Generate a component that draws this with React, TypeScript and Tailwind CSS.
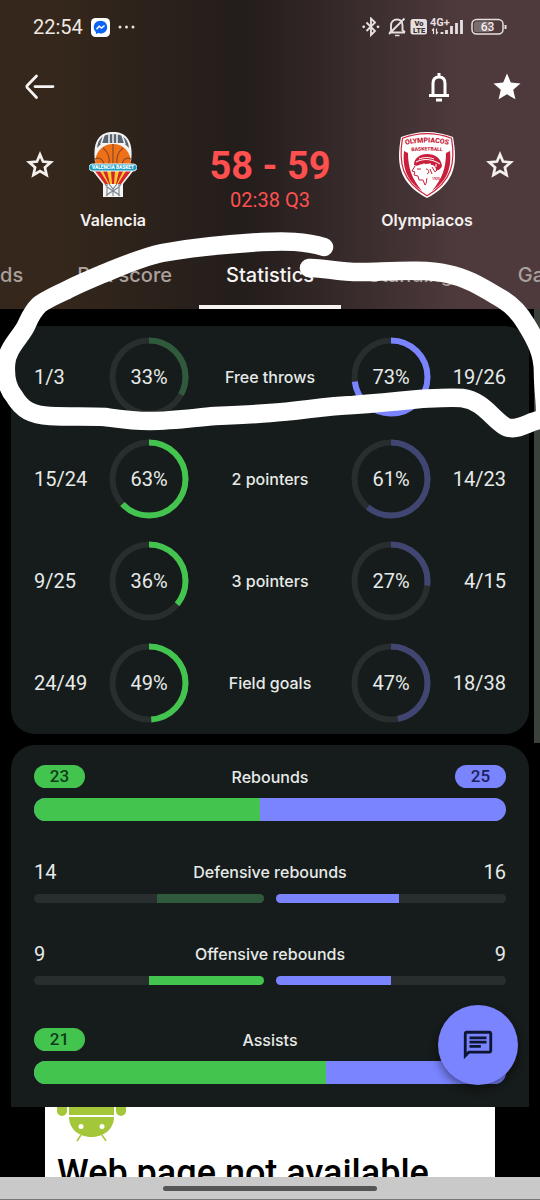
import React from 'react';

type Side = 'home' | 'away';

const shots = [
  { label: 'Free throws', home: '1/3', homePct: 33, away: '19/26', awayPct: 73 },
  { label: '2 pointers', home: '15/24', homePct: 63, away: '14/23', awayPct: 61 },
  { label: '3 pointers', home: '9/25', homePct: 36, away: '4/15', awayPct: 27 },
  { label: 'Field goals', home: '24/49', homePct: 49, away: '18/38', awayPct: 47 },
];

const ringColors = {
  home: { on: '#43c44f', off: '#305a3c' },
  away: { on: '#7a84ff', off: '#414572' },
};

function StatusIcons() {
  return (
    <svg width="146" height="20" viewBox="0 0 146 20" fill="none" stroke="#e6dfdf" aria-hidden="true">
      <path d="M4.500 5.500l8.500 8.500-4 4V1.500l4 4-8.500 8.500" strokeWidth="1.900" />
      <circle cx="1.700" cy="9.800" r="1.400" fill="#e6dfdf" stroke="none" />
      <circle cx="16" cy="9.800" r="1.400" fill="#e6dfdf" stroke="none" />
      <path d="M27 15.500h16M29 15V8.500c0-3.500 2.500-6 6-6s5.500 2.500 5.500 6V13l2.500 2.500M27 17L42.500 1.500" strokeWidth="1.900" />
      <path d="M33 18.500h4.500" strokeWidth="1.500" />
      <rect x="48.500" y="2" width="16.500" height="15.500" rx="2.500" fill="#e6dfdf" stroke="none" />
      <g fill="#3b2f30" stroke="none" fontFamily="Roboto, sans-serif" fontWeight="900" fontSize="7.500" textAnchor="middle">
        <text x="57" y="9">Vo</text>
        <text x="57" y="16">LTE</text>
      </g>
      <text x="68" y="8.500" fill="#e6dfdf" stroke="none" fontFamily="Roboto, sans-serif" fontWeight="700" fontSize="11">4G+</text>
      <path d="M71.500 17v-5l-1.500 1.500M74.500 11.500v5l1.500-1.500" strokeWidth="1.200" />
      <path d="M80 17v-2M84.500 17v-4M89.500 17V9M94.500 17V6M99.500 17V3" strokeWidth="2.800" />
      <rect x="110" y="2.500" width="31" height="14.500" rx="4.500" strokeWidth="1.500" />
      <rect x="112" y="4.500" width="17" height="10.500" rx="2.500" fill="#7b6d6e" stroke="none" />
      <path d="M143.500 8v4" strokeWidth="2" />
      <text x="125.500" y="13.800" fill="#f3eeee" stroke="none" fontFamily="Roboto, sans-serif" fontWeight="500" fontSize="12" textAnchor="middle">63</text>
    </svg>
  );
}

function MessengerBadge() {
  return (
    <svg width="19" height="19" viewBox="0 0 19 19" aria-hidden="true">
      <rect width="19" height="19" rx="4.500" fill="#fff" />
      <path d="M9.500 2.800c-3.900 0-6.700 2.800-6.700 6.400 0 2 .8 3.600 2.100 4.700v2.300l2.100-1.100c.8.300 1.600.4 2.500.4 3.900 0 6.700-2.700 6.700-6.300s-2.800-6.400-6.700-6.400z" fill="#0b63f3" />
      <path d="M5.500 11.300l2.700-3.100 2.400 1.900 2.900-2.600" fill="none" stroke="#fff" strokeWidth="1.500" />
    </svg>
  );
}

function StarIcon({ filled = false }: { filled?: boolean }) {
  return (
    <svg width="28" height="28" viewBox="0 0 28 28" aria-hidden="true">
      <path
        d={filled
          ? 'M14 .500l3.800 9 9.700.900-7.300 6.400 2.200 9.500-8.400-5-8.400 5 2.200-9.500L.500 10.400l9.700-.9z'
          : 'M14 3.500l3 7.100 7.700.700-5.800 5.100 1.700 7.500-6.600-3.900-6.600 3.900 1.700-7.500-5.800-5.100 7.700-.7z'}
        fill={filled ? '#fff' : 'none'}
        stroke={filled ? 'none' : '#f4f0ee'}
        strokeWidth="2.700"
      />
    </svg>
  );
}

function ValenciaLogo() {
  return (
    <svg width="48" height="67" viewBox="0 0 48 67" role="img" aria-label="Valencia Basket">
      <path d="M6 31C3 8 12 1 24 1s21 7 18 30z" fill="#f4f4f2" />
      <path d="M8 17C9 7 15 3 24 3s15 4 16 14l-5-5H13z" fill="#596573" />
      <path d="M15 4l-3 9M20 3v9M24 2v10M28 3v9M33 4l3 9" stroke="#f4f4f2" strokeWidth="1.500" />
      <path d="M6 33c0-13 8-20 18-20s18 7 18 20z" fill="#ef7117" />
      <path d="M24 13v20M6 28c4-2 7-1 9 5M42 28c-4-2-7-1-9 5M14 17c5 4 7 9 6 16M34 17c-5 4-7 9-6 16" fill="none" stroke="#8d4a2c" strokeWidth="1.200" />
      <path d="M3 39h42L34 53v13H14V53z" fill="#f4f4f2" />
      <path d="M6 40h36L32 53H16z" fill="#f6c928" />
      <path d="M6 40h5l8 13h-3zM14 40h4l3 13h-1zM22 40h4l-1 13h-2zM30 40h4l-6 13h-1zM37 40h5L32 53h-3z" fill="#d52331" />
      <path d="M16 53c3 6 12 8 15 12M32 53c-3 6-12 8-15 12M20 53l4 5 4-5M18 53v12M30 53v12M24 58v7" fill="none" stroke="#778391" strokeWidth="1.100" />
      <path d="M4 33h40c3 0 4 2 4 3.500S47 40 44 40H4c-3 0-4-2-4-3.500S1 33 4 33z" fill="#1d9dc6" stroke="#edf6f8" strokeWidth="1" />
      <text x="24" y="38.200" textAnchor="middle" fontFamily="Roboto, sans-serif" fontWeight="900" fontSize="4.800" fill="#fff">VALENCIA BASKET</text>
    </svg>
  );
}

function OlympiacosLogo() {
  return (
    <svg width="60" height="68" viewBox="0 0 60 68" role="img" aria-label="Olympiacos Basketball">
      <path d="M30 1c9 0 18 2 26 5 5 27 2 46-26 61C2 52-1 33 4 6c8-3 17-5 26-5z" fill="#fff" />
      <path d="M30 2.700c8 0 16 1.500 24.500 4.500 4 24 1 43-24.500 57.500C4.500 50.200 1.500 31.200 5.500 7.200 14 4.200 22 2.700 30 2.700z" fill="none" stroke="#cf2440" strokeWidth="1.200" />
      <path d="M7 20l4 2c0 15 4 26 14 38C12 51 5 40 7 20zM53 20l-4 2c0 15-4 26-14 38 13-9 20-20 18-40z" fill="#c91f3b" />
      <path id="crest-arc-a" d="M7 14q23-5 46 0" fill="none" />
      <path id="crest-arc-b" d="M13 20.500q17-2 34 0" fill="none" />
      <g fontFamily="Roboto, sans-serif" fontWeight="900" fill="#c91f3b" textAnchor="middle">
        <text fontSize="7"><textPath href="#crest-arc-a" startOffset="50%">OLYMPIACOS</textPath></text>
        <text fontSize="5"><textPath href="#crest-arc-b" startOffset="50%">BASKETBALL</textPath></text>
      </g>
      <path d="M17 34c0-7 6-11 13-11 8 0 14 4 15 12-1 3-4 5-6 4 0-3-2-5-4-5-4-3-7 0-9-1-3 0-6 3-9 1z" fill="#c91f3b" />
      <path d="M19 31c8-4 16-3 24 2M22 28c5-2 10-2 15 0M27 32v3M33 32v3M39 33v3" stroke="#fff" strokeWidth="1" fill="none" />
      <path d="M18 35l-3 5 3 1-1 3 4 1 1 4 4 0 2 5c2-2 1-4 2-7M29 38c3 0 4 4 1 5M20 38h4M35 36l3 5 3-3M33 38l2 5" fill="none" stroke="#c91f3b" strokeWidth="1" />
      <text x="39" y="49" textAnchor="middle" fontFamily="Roboto, sans-serif" fontWeight="700" fontSize="3.500" fill="#c91f3b">1925</text>
    </svg>
  );
}

function Team({ name, children }: { name: string; children: React.ReactNode }) {
  return (
    <div className="flex w-[118px] flex-col items-center gap-2.5">
      <div className="flex h-[67px] items-center">{children}</div>
      <h2 className="font-[Inter,sans-serif] text-base leading-6 font-semibold text-[#f4f0ee]">{name}</h2>
    </div>
  );
}

function Ring({ value, side, active }: { value: number; side: Side; active: boolean }) {
  const length = 2 * Math.PI * 36;
  const color = active ? ringColors[side].on : ringColors[side].off;
  return (
    <div className="relative flex size-20 items-center justify-center">
      <svg className="absolute inset-0 -rotate-90" width="80" height="80" viewBox="0 0 80 80" fill="none" strokeWidth="6" aria-hidden="true">
        <circle cx="40" cy="40" r="36.500" stroke="#282e2d" />
        <circle cx="40" cy="40" r="36.500" stroke={color} pathLength={length} strokeDasharray={`${(length * value) / 100} ${length}`} />
      </svg>
      <span className="relative text-xl">{value}%</span>
    </div>
  );
}

function Pill({ value, side }: { value: number; side: Side }) {
  return (
    <span className={`flex h-[23px] w-[51px] items-center justify-center rounded-full text-[17px] font-medium ${side === 'home' ? 'bg-[#43c44f] text-[#0f3d1d]' : 'bg-[#7a84ff] text-[#1c2258]'}`}>
      {value}
    </span>
  );
}

function TotalStat({ label, home, away }: { label: string; home: number; away: number }) {
  return (
    <div className="flex flex-col gap-2.5">
      <div className="flex h-[23px] items-center justify-between">
        <Pill value={home} side="home" />
        <span className="font-[Inter,sans-serif] text-base font-medium">{label}</span>
        <Pill value={away} side="away" />
      </div>
      <div className="flex h-[23px] overflow-hidden rounded-full bg-[#7a84ff]">
        <div className="bg-[#43c44f]" style={{ width: `${(home / (home + away)) * 100}%` }} />
      </div>
    </div>
  );
}

function SplitStat({ label, home, away }: { label: string; home: number; away: number }) {
  const total = home + away;
  return (
    <div className="flex flex-col gap-2.5">
      <div className="grid h-6 grid-cols-[1fr_auto_1fr] items-center">
        <span className="text-xl leading-6">{home}</span>
        <span className="font-[Inter,sans-serif] text-base font-medium">{label}</span>
        <span className="text-right text-xl leading-6">{away}</span>
      </div>
      <div className="grid grid-cols-2 gap-3">
        <div className="flex h-[9px] justify-end overflow-hidden rounded-full bg-[#282e2d]">
          <div className={home >= away ? 'bg-[#43c44f]' : 'bg-[#305a3c]'} style={{ width: `${(home / total) * 100}%` }} />
        </div>
        <div className="flex h-[9px] overflow-hidden rounded-full bg-[#282e2d]">
          <div className={away >= home ? 'bg-[#7a84ff]' : 'bg-[#414572]'} style={{ width: `${(away / total) * 100}%` }} />
        </div>
      </div>
    </div>
  );
}

function Tab({ label, active = false }: { label: string; active?: boolean }) {
  return (
    <button
      type="button"
      role="tab"
      aria-selected={active}
      className={`h-[60px] shrink-0 border-b-4 px-[27px] pb-1 font-[Inter,sans-serif] text-xl leading-6 font-medium whitespace-nowrap ${active ? 'border-[#f7f3f2] text-[#f7f3f2]' : 'border-transparent text-[#aaa19e]'}`}
    >
      {label}
    </button>
  );
}

function Header() {
  return (
    <header className="bg-linear-to-r from-[#35271b] from-10% via-[#231d1b] via-45% to-[#4e3a3c] to-85%">
      <div className="flex h-[54px] items-center justify-between pr-8 pl-[33px]">
        <div className="flex items-center gap-2 text-[#eee7e2]">
          <span className="text-xl">22:54</span>
          <MessengerBadge />
          <svg width="17" height="4" viewBox="0 0 17 4" fill="#e6dfdf" aria-hidden="true">
            <circle cx="2" cy="2" r="1.500" />
            <circle cx="8.500" cy="2" r="1.500" />
            <circle cx="15" cy="2" r="1.500" />
          </svg>
        </div>
        <StatusIcons />
      </div>
      <div className="flex h-[66px] items-center justify-between pr-[19px] pl-6">
        <button type="button" aria-label="Back">
          <svg width="31" height="28" viewBox="0 0 31 28" fill="none" stroke="#f7f3f2" strokeWidth="2.800" strokeLinecap="round" strokeLinejoin="round" aria-hidden="true">
            <path d="M12.500 3L3.500 12.300q-1.300 1.300 0 2.600L12.500 24.500M11 13.600h18" />
          </svg>
        </button>
        <div className="flex items-center gap-10">
          <button type="button" aria-label="Notifications">
            <svg width="28" height="30" viewBox="0 0 28 30" fill="none" stroke="#fff" strokeWidth="3" aria-hidden="true">
              <path d="M4 23.500h20M8 23V11.500c0-4.500 2-6.500 6-6.500s6 2 6 6.500V23M14 1v4M11 28h6" />
            </svg>
          </button>
          <button type="button" aria-label="Remove match from favourites">
            <StarIcon filled />
          </button>
        </div>
      </div>
      <div className="flex items-start px-[26px] pt-[11px]">
        <button type="button" aria-label="Follow Valencia" className="mt-5">
          <StarIcon />
        </button>
        <Team name="Valencia"><ValenciaLogo /></Team>
        <div className="flex flex-1 flex-col items-center gap-0.5 pt-[15px] whitespace-nowrap text-[#ff504f]">
          <strong className="text-[38px] leading-10 font-bold">58 - 59</strong>
          <span className="text-xl leading-6">02:38 Q3</span>
        </div>
        <Team name="Olympiacos"><OlympiacosLogo /></Team>
        <button type="button" aria-label="Follow Olympiacos" className="mt-5">
          <StarIcon />
        </button>
      </div>
      <div role="tablist" className="grid grid-cols-[1fr_auto_1fr] pt-[17px]">
        <div className="flex justify-end overflow-hidden">
          <Tab label="Odds" />
          <Tab label="Box score" />
        </div>
        <Tab label="Statistics" active />
        <div className="flex overflow-hidden">
          <Tab label="Standings" />
          <Tab label="Games" />
        </div>
      </div>
    </header>
  );
}

// Hand-drawn marker loop lying over the first stats row
function MarkerLoop() {
  return (
    <svg className="pointer-events-none absolute top-[220px] left-0" width="540" height="230" viewBox="0 220 540 230" fill="none" stroke="#fff" strokeWidth="18.500" strokeLinecap="round" strokeLinejoin="round" aria-hidden="true">
      <path d="M324 247C305 241 285 241 262 242C228 244 190 248 162 253C142 257 120 267 100 275C86 281 76 285 67 290C54 296 45 300 39 305C31 313 29 320 26 326C20 338 7 348 6 364C5 378 7 388 14 396C22 410 32 415 50 416C70 417 88 416 105 417C120 419 133 421 150 421C172 421 192 418 215 416C240 415 258 414 270 413C300 411 325 406 353 405C380 403 400 401 420 399C438 398 450 397 462 398C484 401 492 419 506 427C518 432 530 420 545 419C546 405 543 390 543 372C543 354 536 340 526 324C519 312 512 305 502 299C483 288 468 278 448 274C425 269 400 271 365 272C340 273 322 267 309 268" />
    </svg>
  );
}

function AndroidBot() {
  return (
    <svg width="70" height="36" viewBox="0 0 70 36" aria-hidden="true">
      <path d="M0 0h10v4a5 5 0 01-10 0zM59 0h10v4a5 5 0 01-10 0zM12 0h45v8H12zM12 10h45c0 11-9 20-22.500 20S12 21 12 10z" fill="#a4c639" />
      <path d="M24 28l-4 6M45 28l4 6" stroke="#a4c639" strokeWidth="1.500" />
      <circle cx="24" cy="19.500" r="2.500" fill="#fff" />
      <circle cx="45" cy="19.500" r="2.500" fill="#fff" />
    </svg>
  );
}

export default function App() {
  return (
    <div className="relative overflow-hidden bg-black font-[Roboto,sans-serif] text-[#e6eae8]">
      <Header />
      <main className="relative flex flex-col gap-[11px] px-[11px] pt-[17px]">
        <div className="absolute top-0 right-0 h-[434px] w-1.5 bg-[#3b413b]" />
        <section className="rounded-3xl bg-[#161c1b] px-[23px]">
          {shots.map((s) => (
            <div key={s.label} className="grid h-[102px] grid-cols-[75px_80px_1fr_80px_75px] items-center">
              <span className="text-xl">{s.home}</span>
              <Ring value={s.homePct} side="home" active={s.homePct > s.awayPct} />
              <span className="text-center font-[Inter,sans-serif] text-base font-medium">{s.label}</span>
              <Ring value={s.awayPct} side="away" active={s.awayPct > s.homePct} />
              <span className="text-right text-xl">{s.away}</span>
            </div>
          ))}
        </section>
        <section className="flex flex-col gap-[43px] rounded-t-3xl bg-[#161c1b] px-[23px] pt-5 pb-[23px]">
          <div className="flex flex-col gap-[39px]">
            <TotalStat label="Rebounds" home={23} away={25} />
            <SplitStat label="Defensive rebounds" home={14} away={16} />
            <SplitStat label="Offensive rebounds" home={9} away={9} />
          </div>
          <TotalStat label="Assists" home={21} away={13} />
        </section>
        <button type="button" aria-label="Open chat" className="absolute right-[22px] bottom-[22px] flex size-20 items-center justify-center rounded-full bg-[#7a84ff] shadow-[0_4px_10px_rgba(0,0,0,0.45)]">
          <svg width="34" height="34" viewBox="0 0 24 24" fill="#0d1533" aria-hidden="true">
            <path d="M4 4h16v12H5.170L4 17.170V4m0-2c-1.100 0-1.990.900-1.990 2L2 22l4-4h14c1.100 0 2-.9 2-2V4c0-1.100-.9-2-2-2H4zm2 10h8v2H6v-2zm0-3h12v2H6V9zm0-3h12v2H6V6z" />
          </svg>
        </button>
      </main>
      <section className="mx-[45px] h-[70px] overflow-hidden bg-white pl-3 text-black">
        <AndroidBot />
        <h1 className="pt-2.5 text-4xl font-medium whitespace-nowrap">Web page not available</h1>
      </section>
      <footer className="relative flex h-[23px] items-center justify-center border-b border-[#777] bg-[#c9c9c9]">
        <div className="h-[5px] w-[214px] rounded-full bg-[#555]" />
      </footer>
      <MarkerLoop />
    </div>
  );
}
